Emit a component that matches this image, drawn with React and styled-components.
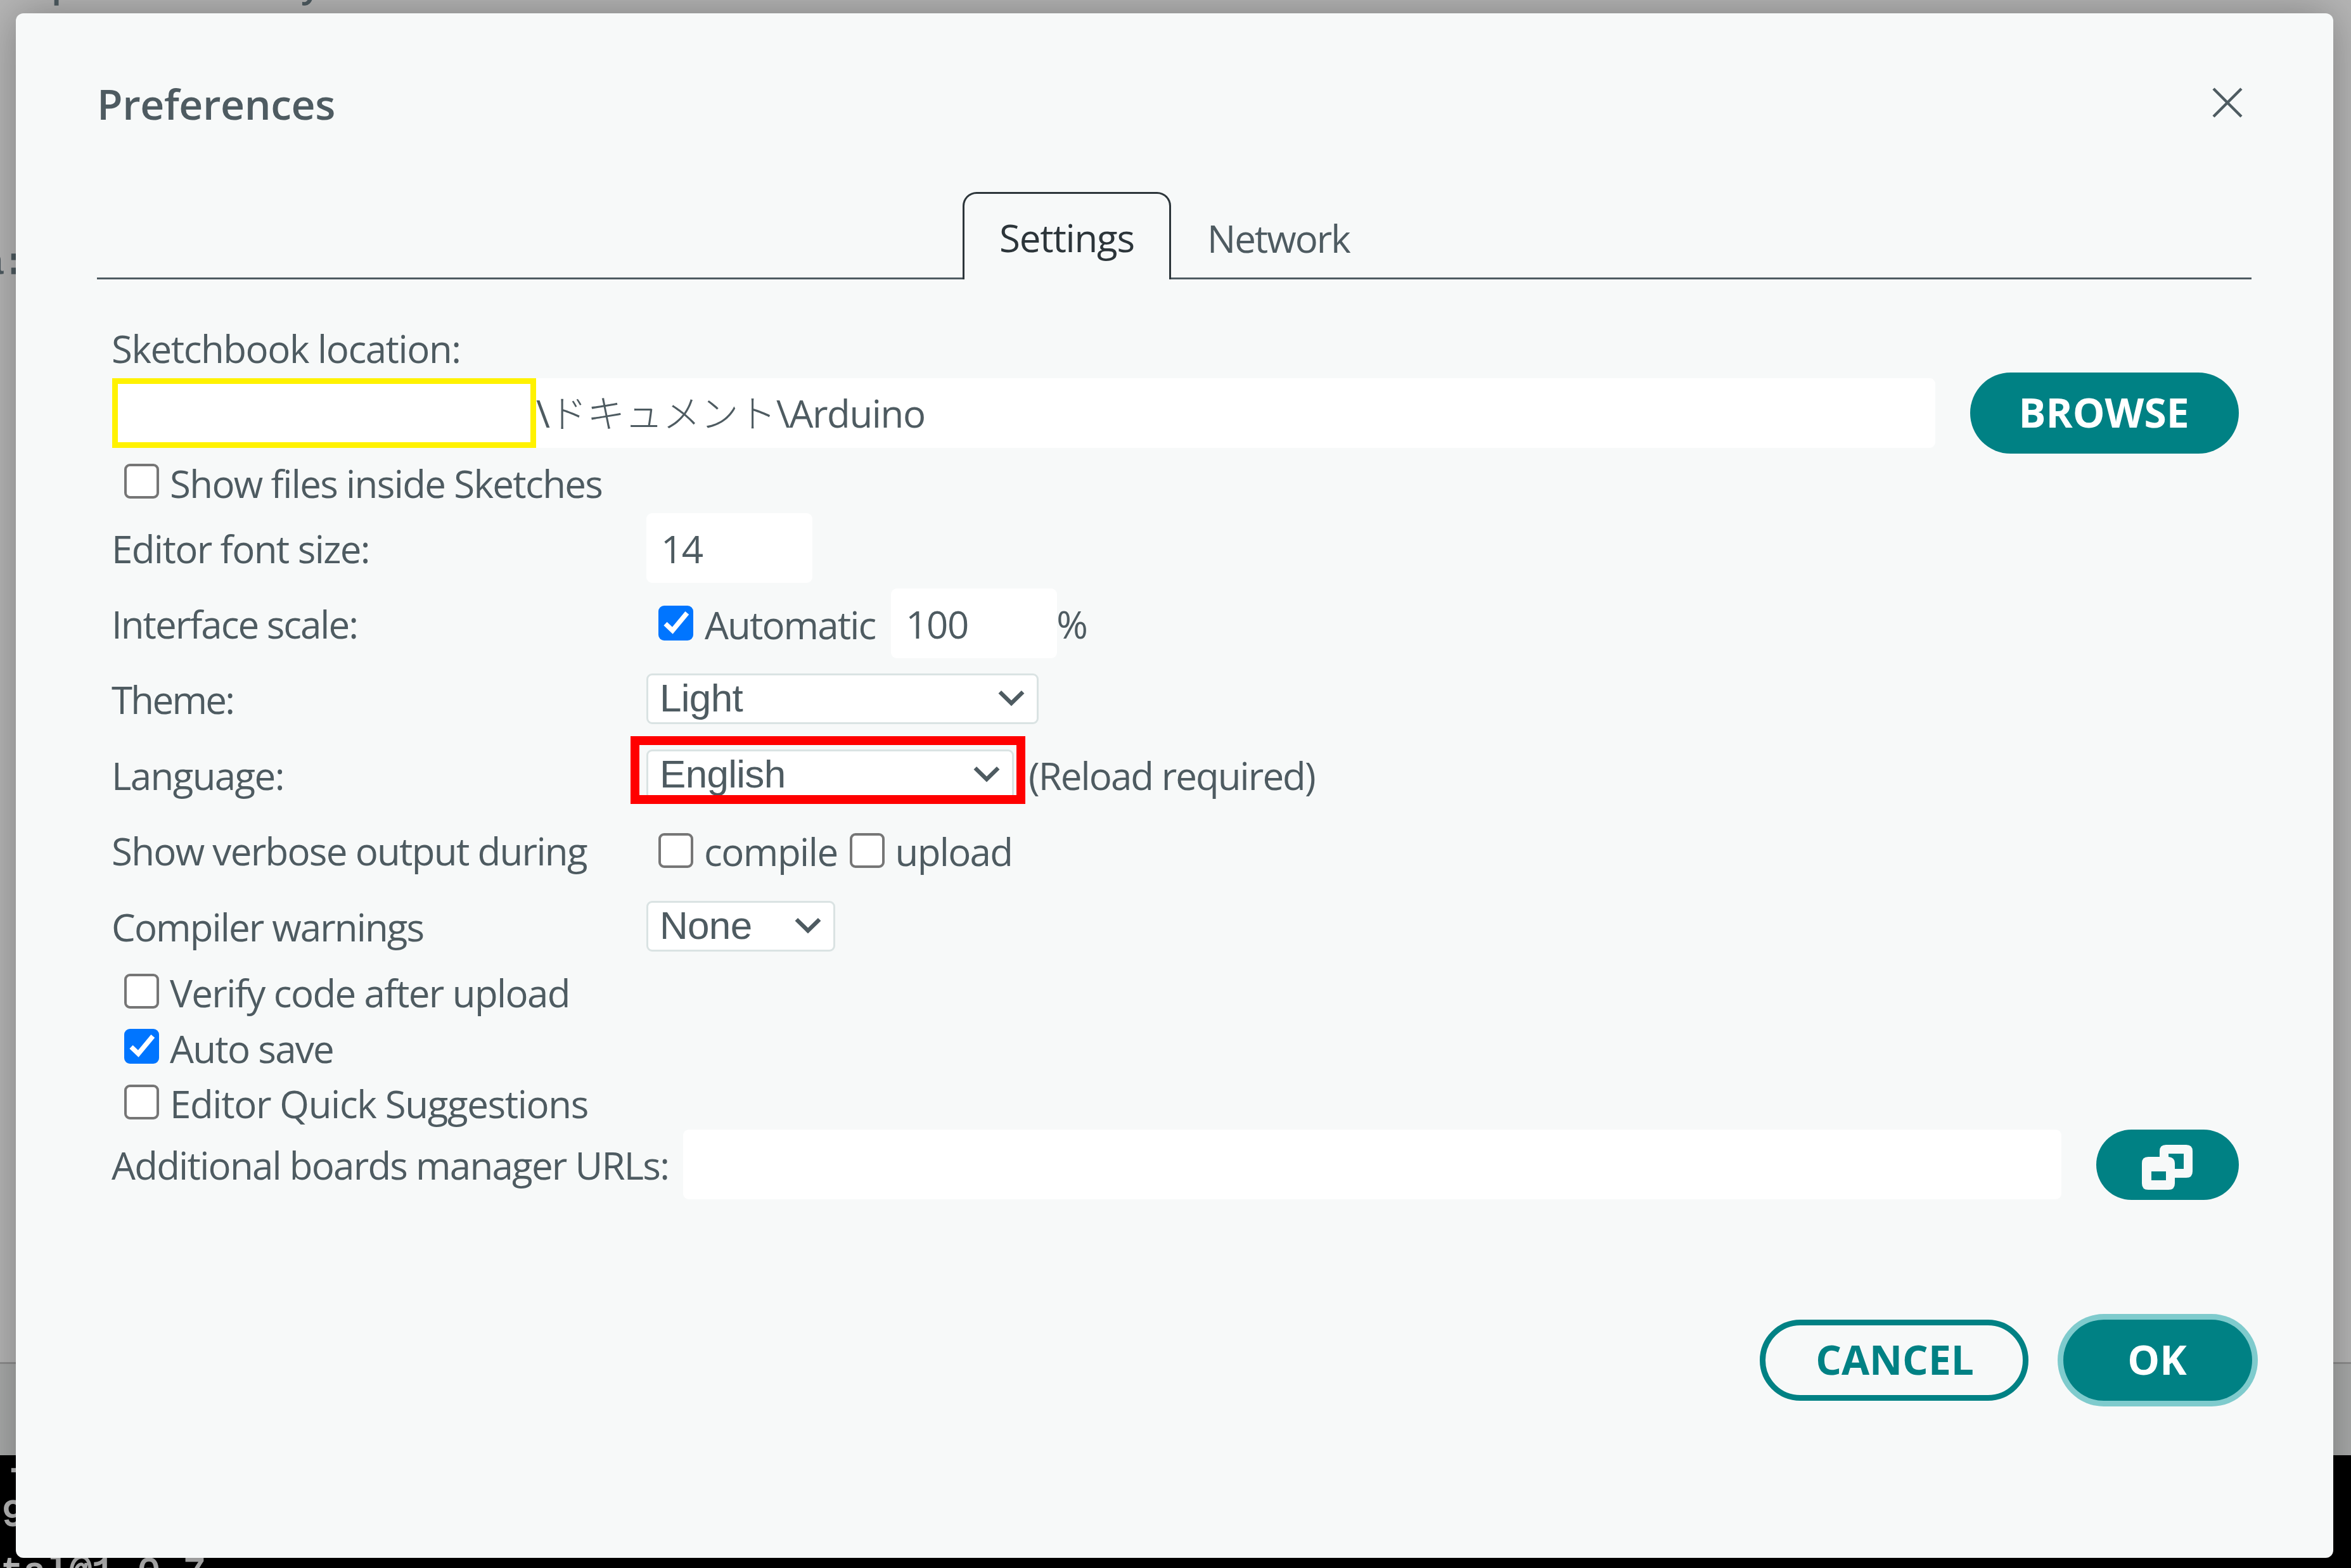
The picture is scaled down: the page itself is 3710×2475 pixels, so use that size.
import { useState } from "react";
import styled, { createGlobalStyle } from "styled-components";

const CheckOption = ({ label, checked: initial = false, spacing, lift, wide }) => {
  const [checked, setChecked] = useState(initial);
  return (
    <Option onClick={() => setChecked(!checked)}>
      <Box $checked={checked} $lift={lift}>
        {checked && (
          <svg width="55" height="55" viewBox="0 0 55 55" fill="none">
            <path d="M11 28.5 22.3 39.2 45.3 11.5" stroke="#fff" strokeWidth="7.6" />
          </svg>
        )}
      </Box>
      <OptionLabel $spacing={spacing} $wide={wide}>
        {label}
      </OptionLabel>
    </Option>
  );
};

const Dropdown = ({ value, width }) => (
  <Select $width={width}>
    {value}
    <svg width="42" height="26" viewBox="0 0 42 26" fill="none">
      <path d="M2.8 3.2 21 21 39.2 3.2" stroke="#4e5b61" strokeWidth="6.5" />
    </svg>
  </Select>
);

const App = () => {
  const [tab, setTab] = useState("Settings");

  return (
    <>
      <GlobalStyle />
      <Workbench>
        <Editor>
          <CodeLine $indent={81} $top={-56}>
            {"p          y"}
          </CodeLine>
          <CodeLine $indent={-29} $top={364} $spacing={-3}>
            a:
          </CodeLine>
        </Editor>
        <StatusStrip />
        <Console>
          <ConsoleLine $indent={9} $height={46}>-</ConsoleLine>
          <ConsoleLine $indent={3} $height={98}>9</ConsoleLine>
          <ConsoleLine $indent={1} $height={84}>tal@1.0.7</ConsoleLine>
        </Console>
        <Dialog>
          <Header>
            <Title>Preferences</Title>
            <CloseButton>
              <svg width="48" height="48" viewBox="0 0 48 48" fill="none">
                <path d="M2 2 46 46M46 2 2 46" stroke="#4e5b61" strokeWidth="4.4" />
              </svg>
            </CloseButton>
          </Header>

          <Tabs>
            <TabsEdge />
            <ActiveTab onClick={() => setTab("Settings")}>{tab}</ActiveTab>
            <Tab>Network</Tab>
          </Tabs>

          <Form>
            <Row $height={78}>
              <Label $spacing={-1.45}>Sketchbook location:</Label>
            </Row>
            <Row $height={128}>
              <PathField>
                <Redacted />
                <PathText>
                  \<Kana>ドキュメント</Kana>\Arduino
                </PathText>
              </PathField>
              <Button $width={424}>BROWSE</Button>
            </Row>
            <Row $height={89}>
              <CheckOption label="Show files inside Sketches" spacing={-1.65} lift={2} />
            </Row>
            <Row $height={119}>
              <Label $column $spacing={-1.6}>Editor font size:</Label>
              <NumberField>14</NumberField>
            </Row>
            <Row $height={119}>
              <Label $column $spacing={-2}>Interface scale:</Label>
              <CheckOption label="Automatic" checked spacing={-1.9} wide />
              <NumberField $gap={25}>100</NumberField>
              <Label $spacing={-1.5}>%</Label>
            </Row>
            <Row $height={120}>
              <Label $column $spacing={-2.7}>Theme:</Label>
              <Dropdown value="Light" width={619} />
            </Row>
            <Row $height={119}>
              <Label $column $spacing={-1.6}>Language:</Label>
              <Highlighted>
                <Dropdown value="English" width={580} />
              </Highlighted>
              <Hint>(Reload required)</Hint>
            </Row>
            <Row $height={120}>
              <Label $column $spacing={-1.7}>Show verbose output during</Label>
              <CheckOption label="compile" spacing={-1.5} />
              <CheckOption label="upload" spacing={-1.7} />
            </Row>
            <Row $height={119}>
              <Label $column $spacing={-1.9}>Compiler warnings</Label>
              <Dropdown value="None" width={298} />
            </Row>
            <Row $height={88}>
              <CheckOption label="Verify code after upload" spacing={-1.6} lift={2} />
            </Row>
            <Row $height={87}>
              <CheckOption label="Auto save" checked spacing={-1.7} lift={3} />
            </Row>
            <Row $height={87}>
              <CheckOption label="Editor Quick Suggestions" spacing={-1.35} />
            </Row>
            <Row $height={110}>
              <Label $spacing={-1.75}>Additional boards manager URLs:</Label>
              <UrlField />
              <IconButton $width={225} $height={111}>
                <WindowsIcon />
              </IconButton>
            </Row>
          </Form>

          <Footer>
            <OutlineButton $width={424}>CANCEL</OutlineButton>
            <FocusedButton $width={298}>OK</FocusedButton>
          </Footer>
        </Dialog>
      </Workbench>
    </>
  );
};

const WindowsIcon = () => (
  <svg width="80" height="71" viewBox="0 0 80 71">
    <path
      fill="#f7f9f9"
      fillRule="evenodd"
      d="M38 0H70Q80 0 80 10V42Q80 52 70 52H52V61Q52 71 42 71H10Q0 71 0 61V29Q0 19 10 19H28V10Q28 0 38 0ZM42 14V19Q52 20 52 29V38H66V14ZM15 42V56H38V42Z"
    />
  </svg>
);

const GlobalStyle = createGlobalStyle`
  *,
  *::after {
    box-sizing: border-box;
  }

  body {
    margin: 0;
    overflow: hidden;
    font-family: "Open Sans", "Noto Sans CJK JP", sans-serif;
    font-size: 60px;
    color: #4e5b61;
  }

  svg {
    display: block;
    flex: none;
  }
`;

const Workbench = styled.div`
  position: relative;
  display: flex;
  flex-direction: column;
  width: 3710px;
  height: 2475px;
  overflow: hidden;
  background: #b6b6b6;
`;

const Editor = styled.div`
  height: 2150px;
  overflow: hidden;
`;

const CodeLine = styled.div`
  margin: ${(p) => p.$top}px 0 0 ${(p) => p.$indent}px;
  font-family: "Liberation Mono", monospace;
  line-height: 72px;
  letter-spacing: ${(p) => p.$spacing || -0.4}px;
  white-space: pre;
  -webkit-text-stroke: 1.5px #4e5b61;
`;

const StatusStrip = styled.div`
  height: 147px;
  border-top: 3px solid #8f8f8f;
  background: #a9abaa;
`;

const Console = styled.div`
  flex: 1;
  overflow: hidden;
  background: #000;
`;

const ConsoleLine = styled.div`
  padding-left: ${(p) => p.$indent}px;
  font-family: "Liberation Mono", monospace;
  line-height: ${(p) => p.$height}px;
  color: #b8b8b8;
  -webkit-text-stroke: 2px #b8b8b8;
`;

const Dialog = styled.div`
  position: absolute;
  top: 21px;
  left: 25px;
  display: flex;
  flex-direction: column;
  width: 3657px;
  height: 2438px;
  padding: 0 129px 0 128px;
  border-radius: 12px;
  background: #f7f9f9;
  box-shadow: 0 0 70px rgba(0, 0, 0, 0.3);
`;

const Header = styled.div`
  display: flex;
  align-items: center;
  justify-content: space-between;
  height: 282px;
`;

const Title = styled.div`
  padding-top: 2px;
  font-size: 66px;
  font-weight: 600;
  letter-spacing: -0.4px;
`;

const CloseButton = styled.div`
  margin-right: 14px;
`;

const Tabs = styled.div`
  display: flex;
  height: 138px;
`;

const TabsEdge = styled.div`
  width: 1366px;
  border-bottom: 3px solid #4e5b61;
`;

const Tab = styled.div`
  flex: 1;
  padding: 6px 0 0 57px;
  border-bottom: 3px solid #4e5b61;
  line-height: 134px;
  letter-spacing: -2px;
`;

const ActiveTab = styled.div`
  width: 329px;
  padding: 2px 0 0 55px;
  border: 3px solid #2c353a;
  border-bottom: none;
  border-radius: 22px 22px 0 0;
  line-height: 134px;
  letter-spacing: -1.2px;
  color: #2c353a;
`;

const Form = styled.div`
  display: flex;
  flex-direction: column;
  padding: 69px 20px 0 24px;
`;

const Row = styled.div`
  display: flex;
  align-items: center;
  height: ${(p) => p.$height}px;
`;

const Label = styled.div`
  flex: none;
  width: ${(p) => (p.$column ? "843px" : "auto")};
  padding-top: 2px;
  letter-spacing: ${(p) => p.$spacing}px;
  text-indent: -1px;
  white-space: nowrap;
`;

const Hint = styled(Label)`
  margin-left: 24px;
  letter-spacing: -1.95px;
`;

const Field = styled.div`
  display: flex;
  align-items: center;
  height: 110px;
  border-radius: 9px;
  background: #fff;
`;

const PathField = styled(Field)`
  width: 2877px;
  margin-right: 55px;
`;

/* covers the user name part of the path */
const Redacted = styled.div`
  width: 669px;
  height: 110px;
  border: 9px solid #fff200;
`;

const PathText = styled.div`
  line-height: 82px;
  padding-bottom: 1px;
  letter-spacing: -1.4px;
`;

const Kana = styled.span`
  font-weight: 300;
  letter-spacing: -0.3px;
`;

const NumberField = styled(Field)`
  width: 262px;
  margin-left: ${(p) => p.$gap || 0}px;
  padding: 2px 0 0 23px;
  letter-spacing: -1.5px;
`;

const UrlField = styled(Field)`
  flex: 1;
  margin: 0 55px 0 23px;
`;

const Option = styled.div`
  display: flex;
  align-items: center;
  margin-left: 19px;
`;

const Box = styled.div`
  width: 55px;
  height: 55px;
  margin-bottom: ${(p) => p.$lift || 0}px;
  border: ${(p) => (p.$checked ? "none" : "4px solid #767676")};
  border-radius: 9px;
  background: ${(p) => (p.$checked ? "#0075ff" : "#fff")};
`;

const OptionLabel = styled.div`
  margin-left: ${(p) => (p.$wide ? 18 : 17)}px;
  padding-top: 4px;
  letter-spacing: ${(p) => p.$spacing}px;
  white-space: nowrap;
`;

const Select = styled.div`
  display: flex;
  align-items: center;
  justify-content: space-between;
  width: ${(p) => p.$width}px;
  height: 80px;
  padding: 0 19px 2px 18px;
  border: 3px solid #dae3e3;
  border-radius: 9px;
  background: #fff;
  font-family: "Liberation Sans", sans-serif;
  font-size: 62px;
  line-height: 72px;
  letter-spacing: -0.7px;
`;

const Highlighted = styled.div`
  position: relative;

  &::after {
    content: "";
    position: absolute;
    top: -21px;
    left: -25px;
    width: 623px;
    height: 107px;
    border: 14px solid #f00;
  }
`;

const Button = styled.div`
  display: flex;
  flex: none;
  align-items: center;
  justify-content: center;
  width: ${(p) => p.$width}px;
  height: ${(p) => p.$height || 128}px;
  padding: 0 2px 2px 0;
  border-radius: 64px;
  background: #008184;
  color: #fff;
  font-size: 64px;
  font-weight: 700;
  line-height: 124px;
`;

const IconButton = styled(Button)`
  padding: 8px 2px 0 0;
`;

const OutlineButton = styled(Button)`
  padding: 0 0 2px 2px;
  border: 9px solid #008184;
  background: transparent;
  color: #008184;
  line-height: 106px;
`;

const FocusedButton = styled(Button)`
  box-shadow: 0 0 0 9px #7fcbcd;
`;

const Footer = styled.div`
  display: flex;
  justify-content: flex-end;
  gap: 55px;
  margin: 190px -1px 0 0;
`;

export default App;
